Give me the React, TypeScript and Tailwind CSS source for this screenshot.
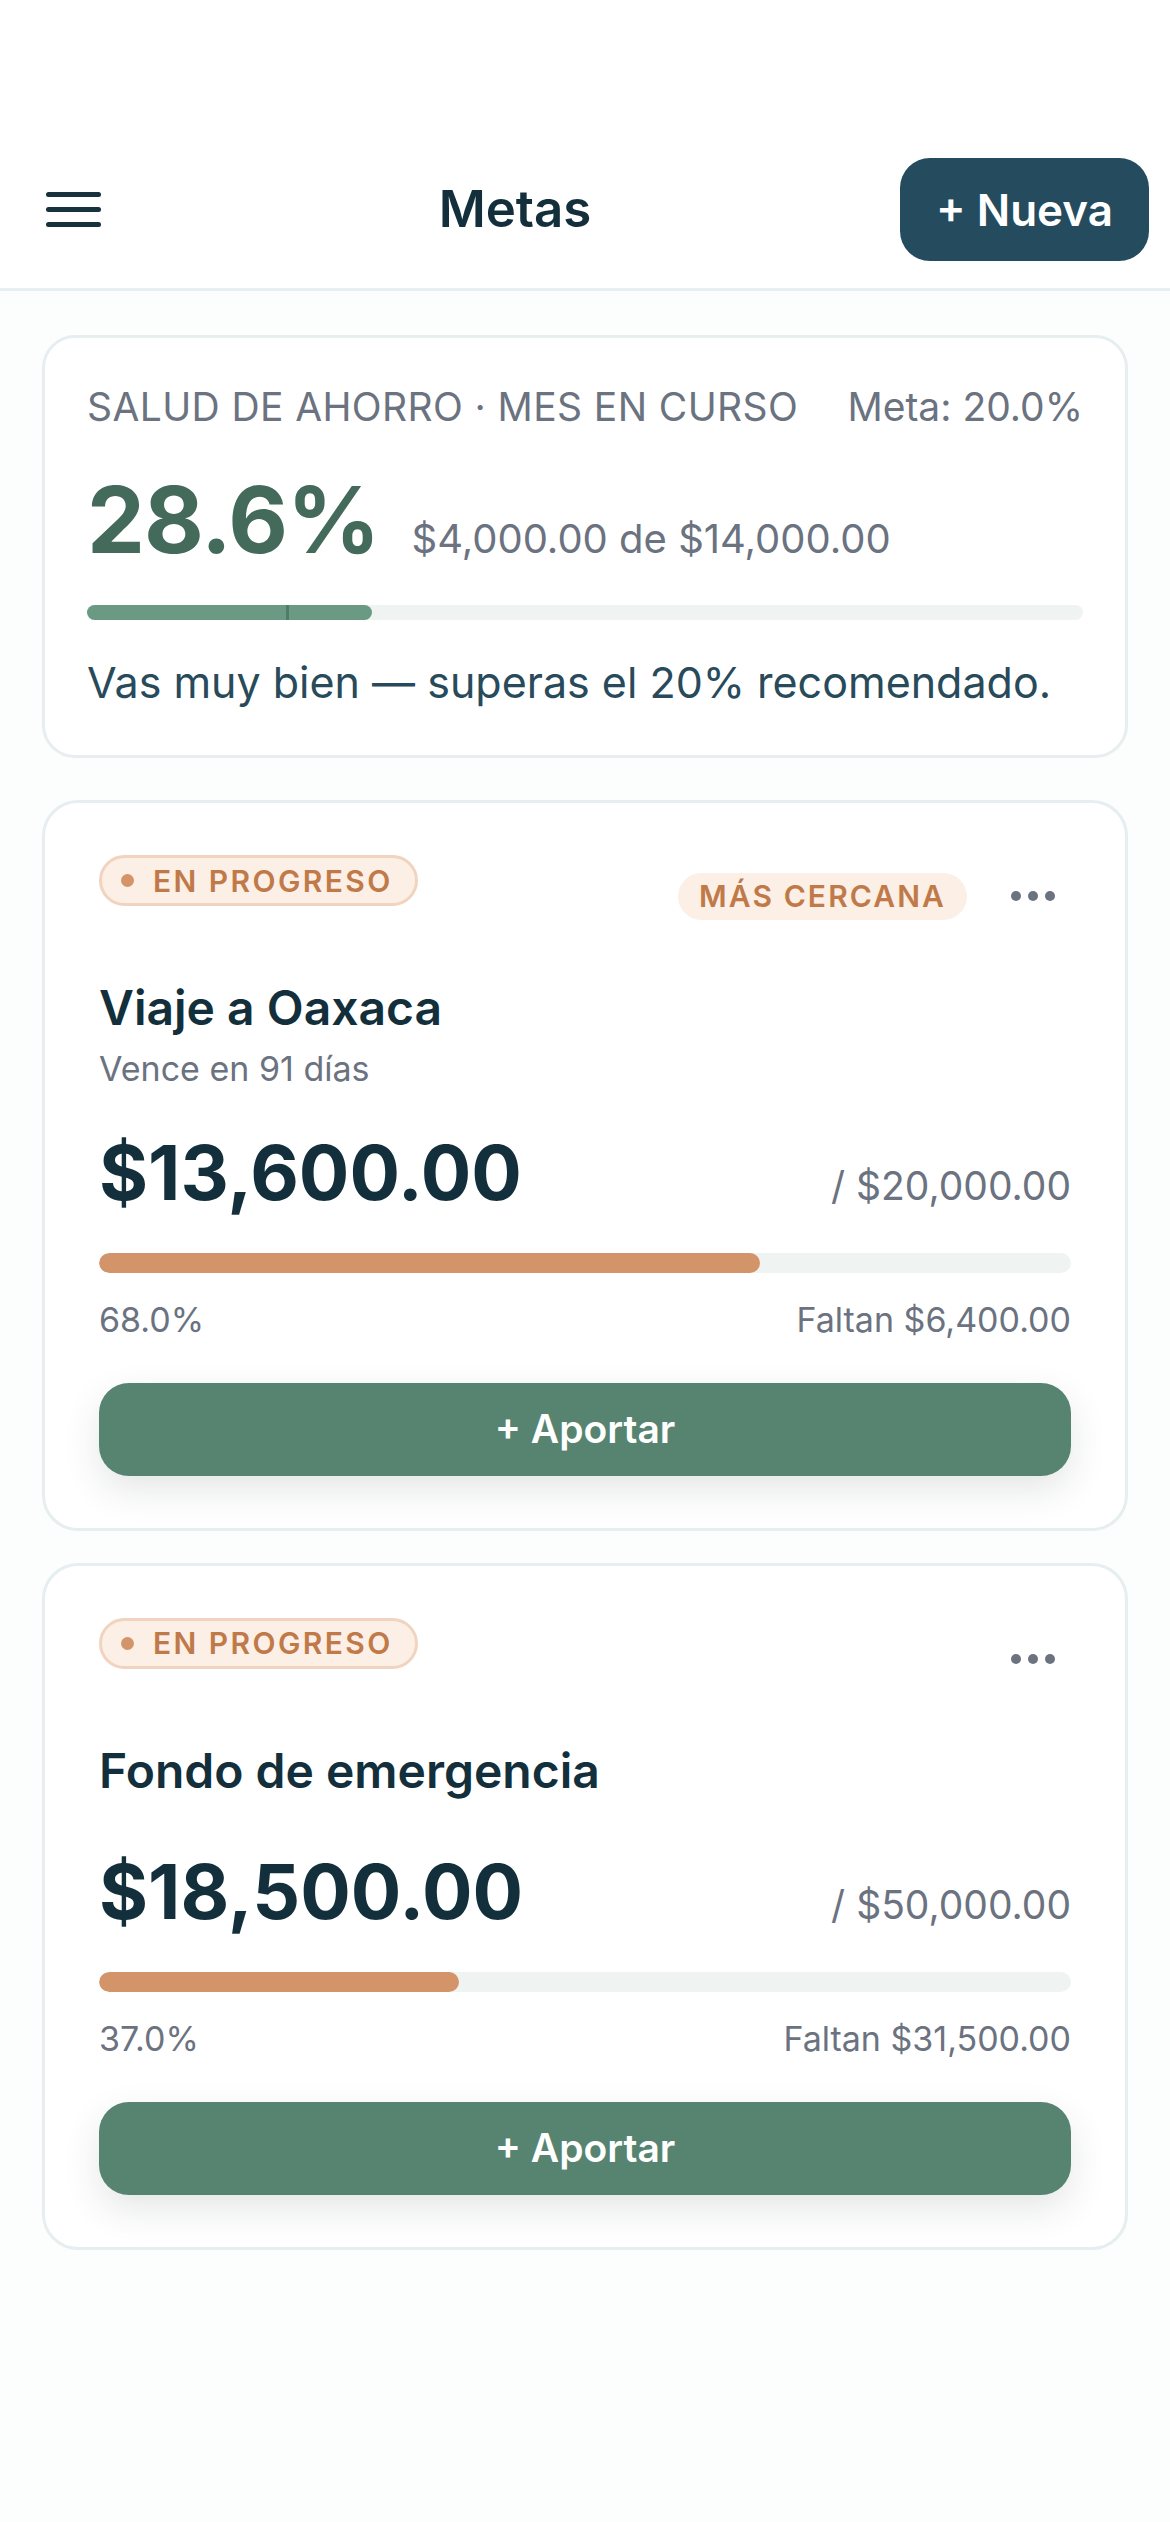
import React from "react";

type Goal = {
  id: string;
  name: string;
  due?: string;
  saved: string;
  target: string;
  pct: number;
  left: string;
  closest?: boolean;
};

const goals: Goal[] = [
  {
    id: "oaxaca",
    name: "Viaje a Oaxaca",
    due: "Vence en 91 días",
    saved: "$13,600.00",
    target: "$20,000.00",
    pct: 68,
    left: "$6,400.00",
    closest: true,
  },
  {
    id: "fondo",
    name: "Fondo de emergencia",
    saved: "$18,500.00",
    target: "$50,000.00",
    pct: 37,
    left: "$31,500.00",
  },
];

function MenuIcon() {
  return (
    <button type="button" aria-label="Menú" className="flex h-[60px] w-[84px] flex-col justify-center gap-[10px]">
      <span className="block h-[5px] w-[55px] rounded-full bg-[#17313d]" />
      <span className="block h-[5px] w-[55px] rounded-full bg-[#17313d]" />
      <span className="block h-[5px] w-[55px] rounded-full bg-[#17313d]" />
    </button>
  );
}

function StatusPill() {
  return (
    <span className="inline-flex h-[51px] items-center gap-[19px] rounded-full border-[3px] border-[#f0d4c0] bg-[#fcefe6] pl-[19px] pr-[22px]">
      <span className="block h-[13px] w-[13px] rounded-full bg-[#d4946a]" />
      <span className="text-[30px] font-semibold uppercase leading-none tracking-[0.08em] text-[#c07a4a]">
        En progreso
      </span>
    </span>
  );
}

function MoreButton() {
  return (
    <button type="button" aria-label="Más opciones" className="flex h-[82px] w-[76px] items-center justify-center gap-[7px]">
      <span className="block h-[10px] w-[10px] rounded-full bg-[#6b7280]" />
      <span className="block h-[10px] w-[10px] rounded-full bg-[#6b7280]" />
      <span className="block h-[10px] w-[10px] rounded-full bg-[#6b7280]" />
    </button>
  );
}

function GoalCard({ goal }: { goal: Goal }) {
  return (
    <article className="rounded-[36px] border-[3px] border-[#e6eef0] bg-white px-[54px] pb-[52px] pt-[52px]">
      <div className="flex items-start justify-between">
        <StatusPill />
        <div className="flex h-[82px] items-center gap-[28px]">
          {goal.closest ? (
            <span className="inline-flex h-[47px] items-center rounded-full bg-[#fcefe6] px-[21px] text-[30px] font-semibold uppercase leading-none tracking-[0.07em] text-[#c07a4a]">
              Más cercana
            </span>
          ) : null}
          <MoreButton />
        </div>
      </div>

      <h2 className="mt-[42px] text-[48px] font-semibold leading-[1.2] text-[#132f3c]">{goal.name}</h2>
      {goal.due ? <p className="mt-[12px] text-[34px] leading-[1.2] text-[#6b7280]">{goal.due}</p> : null}

      <div className={`flex items-baseline justify-between ${goal.due ? "mt-[38px]" : "mt-[48px]"}`}>
        <span className="text-[75px] font-bold leading-[1.2] text-[#132f3c]">{goal.saved}</span>
        <span className="text-[39px] leading-[1.2] text-[#6b7280]">/ {goal.target}</span>
      </div>

      <div className="mt-[35px] h-[20px] w-full overflow-hidden rounded-full bg-[#eff4f3]">
        <div className="h-full rounded-full bg-[#d4946a]" style={{ width: `${goal.pct}%` }} />
      </div>

      <div className="mt-[27px] flex justify-between text-[34px] leading-[1.2] text-[#6b7280]">
        <span>{goal.pct.toFixed(1)}%</span>
        <span>Faltan {goal.left}</span>
      </div>

      <button
        type="button"
        className="mt-[42px] flex h-[93px] w-full items-center justify-center rounded-[30px] bg-[#578470] text-[39px] font-semibold text-white shadow-[0_14px_36px_rgba(30,50,45,0.12)]"
      >
        + Aportar
      </button>
    </article>
  );
}

export default function App() {
  return (
    <div className="min-h-screen bg-[#fcfdfd]" style={{ fontFamily: "Inter, 'Noto Sans', sans-serif" }}>
      <header className="flex items-center border-b-[3px] border-[#e8eff0] bg-white pb-[27px] pl-[46px] pr-[21px] pt-[158px]">
        <MenuIcon />
        <h1 className="flex-1 text-center text-[51px] font-semibold text-[#132f3c]">Metas</h1>
        <button
          type="button"
          className="flex h-[103px] items-center rounded-[30px] bg-[#244b5e] px-[36px] text-[44px] font-semibold text-white"
        >
          + Nueva
        </button>
      </header>

      <main className="px-[42px] pt-[44px]">
        <section className="rounded-[33px] border-[3px] border-[#e6eef0] bg-white px-[42px] pb-[47px] pt-[47px]">
          <div className="flex items-baseline justify-between text-[39px] leading-[1.15] text-[#6b7280]">
            <span className="tracking-[0.01em]">SALUD DE AHORRO · MES EN CURSO</span>
            <span>Meta: 20.0%</span>
          </div>
          <div className="mt-[44px] flex items-baseline gap-[32px]">
            <span className="text-[92px] font-bold leading-none tracking-[-0.01em] text-[#436a5a]">28.6%</span>
            <span className="text-[40px] text-[#6b7280]">$4,000.00 de $14,000.00</span>
          </div>
          <div className="relative mt-[36px] h-[15px] w-full rounded-full bg-[#eff4f3]">
            <div className="h-full rounded-full bg-[#6a9a84]" style={{ width: "28.6%" }} />
            <div className="absolute left-[20%] top-0 h-full w-[3px] bg-[#4f7d69]" />
          </div>
          <p className="mt-[37px] text-[43px] leading-[1.2] text-[#284a5a]">
            Vas muy bien — superas el 20% recomendado.
          </p>
        </section>

        <div className="mt-[42px] flex flex-col gap-[32px]">
          {goals.map((g) => (
            <GoalCard key={g.id} goal={g} />
          ))}
        </div>
      </main>
    </div>
  );
}
